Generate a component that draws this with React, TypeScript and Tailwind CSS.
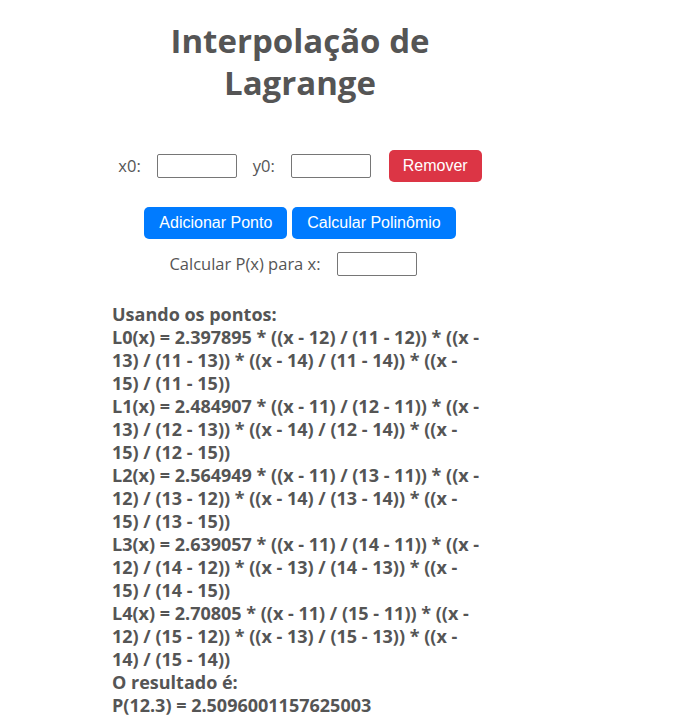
const lines = [
  "L0(x) = 2.397895 * ((x - 12) / (11 - 12)) * ((x -",
  "13) / (11 - 13)) * ((x - 14) / (11 - 14)) * ((x -",
  "15) / (11 - 15))",
  "L1(x) = 2.484907 * ((x - 11) / (12 - 11)) * ((x -",
  "13) / (12 - 13)) * ((x - 14) / (12 - 14)) * ((x -",
  "15) / (12 - 15))",
  "L2(x) = 2.564949 * ((x - 11) / (13 - 11)) * ((x -",
  "12) / (13 - 12)) * ((x - 14) / (13 - 14)) * ((x -",
  "15) / (13 - 15))",
  "L3(x) = 2.639057 * ((x - 11) / (14 - 11)) * ((x -",
  "12) / (14 - 12)) * ((x - 13) / (14 - 13)) * ((x -",
  "15) / (14 - 15))",
  "L4(x) = 2.70805 * ((x - 11) / (15 - 11)) * ((x -",
  "12) / (15 - 12)) * ((x - 13) / (15 - 13)) * ((x -",
  "14) / (15 - 14))",
];

const App = () => {
  return (
    <div className="min-h-[722px] bg-white text-[#555] font-['Open_Sans',sans-serif]">
      <div className="ml-[100px] w-[400px] px-3 pt-[20px]">
        <h1 className="text-center text-[33px] leading-[42px] font-bold">
          Interpolação de
          <br />
          Lagrange
        </h1>

        <div className="mt-[46px] flex items-center justify-center h-[32px] text-[16.5px]">
          <label className="mr-4">x0:</label>
          <input type="text" className="w-[80px] h-[24px] border border-[#767676] rounded-[2px] mr-4" />
          <label className="mr-4">y0:</label>
          <input type="text" className="w-[80px] h-[24px] border border-[#767676] rounded-[2px] mr-[18px]" />
          <button className="h-[32px] px-[14px] rounded-[5px] bg-[#dc3545] text-white text-[16px] font-['Liberation_Sans',Arial,sans-serif]">
            Remover
          </button>
        </div>

        <div className="mt-[25px] flex justify-center gap-[5px]">
          <button className="h-[32px] px-[15px] rounded-[5px] bg-[#007bff] text-white text-[16px] font-['Liberation_Sans',Arial,sans-serif]">
            Adicionar Ponto
          </button>
          <button className="h-[32px] px-[15px] rounded-[5px] bg-[#007bff] text-white text-[16px] font-['Liberation_Sans',Arial,sans-serif]">
            Calcular Polinômio
          </button>
        </div>

        <div className="mt-[13px] flex items-center justify-center pr-[14px] h-[24px] text-[16.5px]">
          <label className="mr-4">Calcular P(x) para x:</label>
          <input type="text" className="w-[80px] h-[24px] border border-[#767676] rounded-[2px]" />
        </div>

        <div className="mt-[27px] font-bold text-[18px] leading-[23px]">
          <div>Usando os pontos:</div>
          {lines.map((l, i) => (
            <div key={i} className="whitespace-nowrap">{l}</div>
          ))}
          <div>O resultado é:</div>
          <div>P(12.3) = 2.5096001157625003</div>
        </div>
      </div>
    </div>
  );
};

export default App;
